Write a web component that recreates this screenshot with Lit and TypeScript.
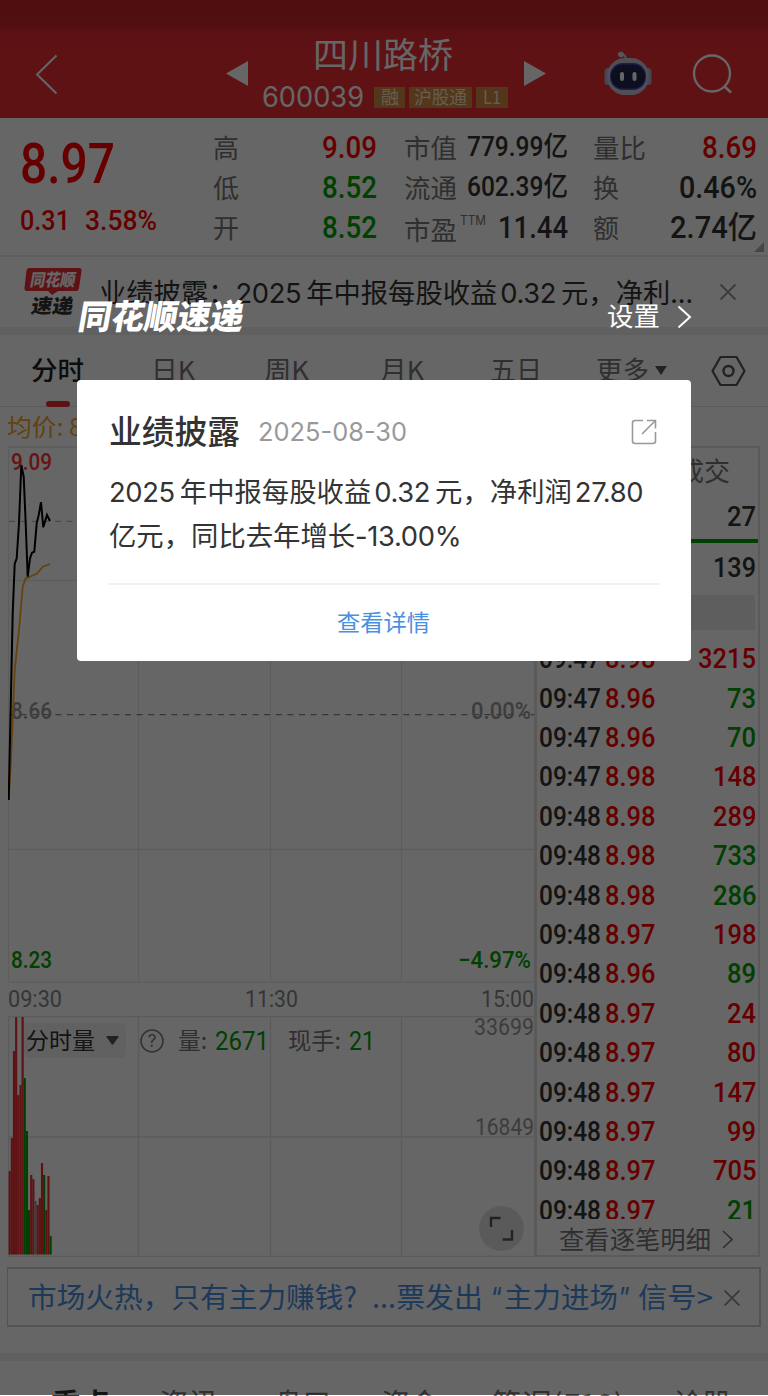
import { LitElement, html, svg, css } from "lit";
import { customElement, property } from "lit/decorators.js";

/** Single line of text set to an exact width, vertically centred on its box. */
@customElement("fit-text")
class FitText extends LitElement {
  @property() text = "";
  @property({ type: Number }) w = 50;
  @property({ type: Number }) size = 26;
  static styles = css`
    :host { display: block; flex: none; }
    svg { display: block; overflow: visible; }
    text { fill: currentColor; white-space: pre; }
  `;
  render() {
    const h = Math.round(this.size);
    return html`<svg width=${this.w} height=${h}><text x="0" y=${h / 2 + this.size * 0.362} font-size=${this.size} textLength=${this.w} lengthAdjust="spacingAndGlyphs">${this.text}</text></svg>`;
  }
}

const t = (text: string, w: number, size: number, cls = "") =>
  html`<fit-text class=${cls} .text=${text} .w=${w} .size=${size}></fit-text>`;

type Cell = [string, number, string, number, number, string];
const quote: Cell[][] = [
  [["高", 26, "9.09", 55, 31, "up"], ["低", 26, "8.52", 55, 31, "down"], ["开", 26, "8.52", 55, 31, "down"]],
  [["市值", 53, "779.99亿", 101, 27, ""], ["流通", 53, "602.39亿", 101, 27, ""], ["市盈", 53, "11.44", 70, 31, ""]],
  [["量比", 53, "8.69", 55, 31, "up"], ["换", 26, "0.46%", 78, 31, ""], ["额", 26, "2.74亿", 87, 31, ""]],
];

const trades: [string, string, string, string][] = [
  ["09:47", "8.98", "3215", "up"], ["09:47", "8.96", "73", "down"], ["09:47", "8.96", "70", "down"],
  ["09:47", "8.98", "148", "up"], ["09:48", "8.98", "289", "up"], ["09:48", "8.98", "733", "down"],
  ["09:48", "8.98", "286", "down"], ["09:48", "8.97", "198", "up"], ["09:48", "8.96", "89", "down"],
  ["09:48", "8.97", "24", "up"], ["09:48", "8.97", "80", "up"], ["09:48", "8.97", "147", "up"],
  ["09:48", "8.97", "99", "up"], ["09:48", "8.97", "705", "up"], ["09:48", "8.97", "21", "down"],
];

/** Volume bars: top edge measured from the top of the panel, and colour. */
const bars: [number, string][] = [
  [155, "r"], [122, "r"], [35, "r"], [1, "r"], [79, "r"], [69, "r"], [1, "r"], [62, "g"], [115, "g"], [194, "g"],
  [159, "r"], [163, "r"], [185, "n"], [189, "r"], [182, "r"], [147, "r"], [159, "g"], [194, "r"], [160, "r"], [220, "g"],
];
const barColor: Record<string, string> = { r: "#eb2d34", g: "#00a000", n: "#999" };

@customElement("app-root")
class AppRoot extends LitElement {
  static styles = css`
    :host { display: block; font-family: "Noto Sans CJK SC", sans-serif; color: #333; }
    * { box-sizing: border-box; }
    svg { display: block; flex: none; }
    .page { position: relative; width: 768px; height: 1396px; overflow: hidden; background: #fff; }
    .row { display: flex; align-items: center; }
    .din { font-family: Roboto, "Noto Sans CJK SC", sans-serif; font-weight: 500; }
    .light { font-weight: 400; }
    .inter { font-family: Inter, "Noto Sans CJK SC", sans-serif; }
    .up { color: #ff0000; }
    .down { color: #00a000; }
    .label { color: #777; }

    header { height: 118px; display: flex; color: #fff; background: linear-gradient(#c1232a 0, #cd272e 27px, #e32b33 30px, #eb2d34 50px); }
    .back { margin: 54px 0 0 35px; }
    .prev { margin: 61px 0 0 168px; }
    .names { width: 246px; margin-left: 14px; padding: 38px 4px 0 0; display: flex; flex-direction: column; align-items: center; }
    .code { margin-top: 10px; gap: 4px; align-self: flex-start; }
    .badge { height: 21px; display: flex; align-items: center; justify-content: center; background: #d08a44; color: #ffe6cc; }
    .b1 { width: 31px; margin-left: 6px; }
    .b2 { width: 63px; }
    .b3 { width: 32px; }
    .next { margin: 61px 0 0 16px; }
    .bot { margin: 50px 0 0 57px; }
    .find { margin: 52px 0 0 39px; }

    .quote { height: 139px; display: flex; padding: 9px 11px 0 20px; border-bottom: 2px solid #e8e8e8; }
    .last { width: 193px; padding-top: 9px; }
    .chg { display: flex; gap: 15px; margin-top: 15px; }
    .group { width: 164px; margin-right: 27px; }
    .group + .group { margin-right: 25px; }
    .group + .group + .group { margin-right: 0; }
    .cell { height: 40px; display: flex; align-items: center; justify-content: space-between; }
    .cell > .label { padding-top: 3px; }
    .cell > .din { padding-bottom: 1px; }
    .cell > .ttm { align-self: flex-start; padding-top: 2px; margin: 0 auto 0 3px; }
    .pe > .label { padding-top: 7px; }
    .corner { align-self: flex-end; margin: 0 -7px 3px -3px; }

    .notice { height: 70px; padding-left: 24px; }
    .ntext { margin-left: 17px; width: 593px; font-size: 27.3px; line-height: 40px; white-space: nowrap; margin-top: -2px; }
    .ntext i, .body i { font-style: normal; font-family: Inter, sans-serif; line-height: 1; letter-spacing: -0.35px; margin: 0 5px 0 0; }
    .ntext i + i, .body i + i { margin-left: 3px; }
    .nclose { margin-left: 28px; }
    .band { height: 8px; background: #f0f0f0; }

    .tabs { height: 72px; padding-left: 31px; border-bottom: 1px solid #e4e4e4; color: #777; }
    .on { font-weight: 500; color: #222; width: 53px; position: relative; }
    .on::after { content: ""; position: absolute; left: 15px; top: 43px; width: 24px; height: 6px; border-radius: 3px; background: #eb2d34; }
    .t1 { margin-left: 67px; } .t2 { margin-left: 69px; } .t3 { margin-left: 71px; } .t4 { margin-left: 66px; } .t5 { margin-left: 54px; }

    .avg { height: 39px; padding-left: 7px; color: #f5a623; }
    .main { display: flex; padding-left: 8px; height: 811px; }
    .charts { width: 526px; flex: none; }
    .axis { height: 33px; padding-bottom: 4px; justify-content: space-between; color: #888; width: 526px; }
    .volume { position: relative; height: 241px; }
    .vhead { position: absolute; left: 16px; top: 7px; height: 35px; }
    .pick { height: 35px; width: 102px; padding-left: 2px; background: rgba(236,236,236,0.7); border-radius: 5px; gap: 11px; }
    .expand { position: absolute; left: 471px; top: 190px; }

    .side { width: 226px; border: 2px solid #e2e2e2; border-left-width: 3px; padding-right: 2px; display: flex; flex-direction: column; }
    .end { display: flex; justify-content: flex-end; }
    .deal { padding: 11px 26px 0 0; }
    .q1 { margin-top: 17px; }
    .green { height: 4px; background: #00a000; margin: 9px -2px 0 0; }
    .q2 { margin-top: 10px; }
    .grey { height: 35px; background: #ececec; margin: 14px 1px 0 0; }
    .list { height: 588px; margin-top: 9px; overflow: hidden; }
    .trade { height: 39.4px; display: flex; align-items: center; padding-left: 2px; }
    .price { margin-left: 4px; }
    .vol { margin-left: auto; }
    .more { margin-left: 22px; gap: 11px; color: #777; height: 32px; margin-top: 4px; }

    .banner { margin: 10px 7px 0; height: 60px; border: 1px solid #cfcfcf; border-width: 2px 2px 2px 1px; padding: 2px 0 0 20px; color: #4a90e2; }
    .bt2 { margin-left: 15px; }
    .ql { margin: 0 2px 0 8px; }
    .qr { margin: 0 8px 0 1px; }
    .bx { margin-left: 11px; }
    .band2 { margin-top: 26px; height: 8px; background: #f0f0f0; }
    .foot { height: 40px; padding: 29px 0 0 51px; align-items: flex-start; color: #777; }
    .foot .sel { color: #333; font-weight: 700; }
    .f1 { margin-left: 49px; } .f2 { margin-left: 56px; } .f3 { margin-left: 50px; } .f4 { margin-left: 52px; } .f5 { margin-left: 49px; }

    .mask { position: absolute; inset: 0 0 1px 0; background: rgba(0, 0, 0, 0.6); padding: 298px 77px 0; }
    .mhead { height: 38px; justify-content: space-between; color: #fff; }
    .brand { font-weight: 900; transform: skewX(-10deg); margin-left: 2px; }
    .set { gap: 17px; margin-right: -1px; }
    .card { margin-top: 44px; height: 281px; border-radius: 4px; background: #fff; padding: 34px 31px 0 32px; }
    .ctitle { height: 36px; }
    .h { font-weight: 500; -webkit-text-stroke: 0.5px #333; }
    .date { color: #999; margin-left: 18px; }
    .ext { margin-left: auto; margin-right: 3px; }
    .body { font-size: 27.35px; line-height: 43.5px; margin-top: 19px; height: 88px; color: #333; white-space: nowrap; }
    .link { margin: 26px 0 0 -1px; border-top: 2px solid #f0f0f0; color: #4a90e2; display: flex; justify-content: center; padding: 26px 2px 0 0; }
  `;

  cross = (s: number) => html`<svg width=${s} height=${s} viewBox="0 0 16 16"><path d="M.5 .5L15.5 15.5M15.5 .5L.5 15.5" stroke="#8c8c8c" stroke-width="1.7" fill="none"/></svg>`;
  tri = html`<svg width="13" height="9" viewBox="0 0 13 9"><path d="M1.2 0H11.8Q13 .2 12.4 1.2L7.3 8.3Q6.5 9.2 5.7 8.3L.6 1.2Q0 .2 1.2 0Z" fill="#555"/></svg>`;

  header() {
    return html`<header>
      <svg class="back" width="23" height="42"><path d="M21.5 1.5L2 20.5L21.5 39.5" fill="none" stroke="#fff" stroke-width="2"/></svg>
      <svg class="prev" width="22" height="26"><path d="M22 0V25L0 12.5Z" fill="#fff"/></svg>
      <div class="names">
        ${t("四川路桥", 140, 35)}
        <div class="row code">${t("600039", 102, 28, "inter")}
          <span class="badge b1">${t("融", 18, 18)}</span><span class="badge b2">${t("沪股通", 53, 18)}</span><span class="badge b3">${t("L1", 18, 18)}</span></div>
      </div>
      <svg class="next" width="22" height="26"><path d="M0 0V25L22 12.5Z" fill="#fff"/></svg>
      <svg class="bot" width="50" height="46" viewBox="0 0 50 46">
        <path d="M15 4Q22 3 23 9" fill="none" stroke="#c8ccdc" stroke-width="2"/><circle cx="18" cy="4.500" r="2.8" fill="#d8dae8"/>
        <rect x="1.500" y="18" width="7" height="17" rx="3.5" fill="#aab0cc"/><rect x="41.500" y="18" width="7" height="17" rx="3.5" fill="#aab0cc"/>
        <rect x="4" y="8" width="42" height="37" rx="18" fill="#c5c8da"/>
        <rect x="7" y="13" width="36" height="27" rx="12.5" fill="#6543c4"/><rect x="8" y="14.5" width="34" height="24" rx="11.5" fill="#202a4c"/>
        <rect x="17" y="22" width="4" height="9" rx="2" fill="#fff"/><rect x="29.5" y="22" width="4" height="9" rx="2" fill="#fff"/>
      </svg>
      <svg class="find" width="42" height="44"><circle cx="20" cy="21.5" r="18" fill="none" stroke="#fff" stroke-width="2.4"/><path d="M32 34L39 40.5" stroke="#fff" stroke-width="2.6"/></svg>
    </header>`;
  }

  priceChart() {
    const line = (p: string) => p.split(" ").map((q) => { const [x, y] = q.split(",").map(Number); return `${(x / 3 - 8).toFixed(1)},${(y / 3 - 6).toFixed(1)}`; }).join(" ");
    return html`<svg width="526" height="537">
      <path d="M.5 536V1H526M.5 134.5H526M.5 403.5H526M0 536H526M130.5 0V536M262.5 0V536M393.5 0V536" fill="none" stroke="#e8e8e8" stroke-width="1.3"/>
      <path d="M1 75.300H526" stroke="#c8b890" stroke-width="1.2" stroke-dasharray="6 5.5"/>
      <path d="M1 268.6H526" stroke="#888" stroke-width="1.3" stroke-dasharray="6 5.6"/>
      <g class="din" font-size="24">
        <text x="3" y="23.500" textLength="41" lengthAdjust="spacingAndGlyphs" fill="#ff3333">9.09</text>
        <text x="3" y="273" textLength="41" lengthAdjust="spacingAndGlyphs" fill="#999">8.66</text>
        <text x="463" y="273" textLength="60" lengthAdjust="spacingAndGlyphs" fill="#999">0.00%</text>
        <text x="3" y="522" textLength="41" lengthAdjust="spacingAndGlyphs" fill="#00a000">8.23</text>
        <text x="450" y="522" textLength="73" lengthAdjust="spacingAndGlyphs" fill="#00a000">−4.97%</text>
      </g>
      <polyline points=${line("26,1080 33,960 44,690 58,560 68,440 77,415 90,410 112,400 128,380 150,372")} fill="none" stroke="#ffa520" stroke-width="1.8"/>
      <polyline points=${line("26,1080 38,520 44,372 50,355 57,250 64,75 71,110 77,250 83,410 90,355 96,338 103,335 110,250 116,225 123,187 130,262 141,225 150,243")} fill="none" stroke="#000" stroke-width="2"/>
    </svg>`;
  }

  volumeChart() {
    return html`<div class="volume">
      <svg width="526" height="241">
        <path d="M.5 240V.5H526M.5 121H526M0 240.5H526M130.5 0V240M262.5 0V240M393.5 0V240" fill="none" stroke="#e4e4e4" stroke-width="1.3"/>
        ${bars.map(([y, c], i) => svg`<rect x=${0.6 + i * 2.155} y=${y} width="2.16" height=${238.5 - y} fill=${barColor[c]}/>`)}
        <g class="din light" font-size="24" fill="#999">
          <text x="466" y="19" textLength="60" lengthAdjust="spacingAndGlyphs">33699</text>
          <text x="467" y="119" textLength="59" lengthAdjust="spacingAndGlyphs">16849</text>
        </g>
      </svg>
      <div class="row vhead">
        <div class="row pick">${t("分时量", 69, 23)}${this.tri}</div>
        <svg width="52" height="26"><circle cx="26" cy="13" r="11" fill="none" stroke="#808080" stroke-width="1.6"/><text x="26" y="19" text-anchor="middle" class="inter" font-size="17" fill="#777">?</text></svg>
        ${t("量:", 29, 23, "label")}<svg width="8" height="2"></svg>${t("2671", 54, 25, "down din light")}<svg width="19" height="2"></svg>
        ${t("现手:", 53, 23, "label")}<svg width="8" height="2"></svg>${t("21", 26, 25, "down din light")}
      </div>
      <svg class="expand" width="45" height="45"><circle cx="22.5" cy="22.5" r="22.5" fill="#e2e2e2"/><path d="M21.5 12H12V21M33 24V33.5H23.5" fill="none" stroke="#555" stroke-width="2.4"/></svg>
    </div>`;
  }

  side() {
    return html`<div class="side">
      <div class="end deal label">${t("成交", 52, 26)}</div>
      <div class="end q1 din">${t("27", 29, 28)}</div>
      <div class="green"></div>
      <div class="end q2 din">${t("139", 43, 28)}</div>
      <div class="grey"></div>
      <div class="list">${trades.map(([a, b, c, d]) => html`<div class="trade din">
        ${t(a, 62, 28)}${t(b, 50.5, 28, "price up")}${t(c, c.length * 14.5, 28, `vol ${d}`)}</div>`)}</div>
      <div class="row more">${t("查看逐笔明细", 152, 25)}<svg width="11" height="19"><path d="M1 1L10 9.5L1 18" fill="none" stroke="#777" stroke-width="1.6"/></svg></div>
    </div>`;
  }

  render() {
    return html`<div class="page">
      ${this.header()}
      <section class="quote">
        <div class="last din up">${t("8.97", 95, 55)}<div class="chg">${t("0.31", 50, 28)}${t("3.58%", 72, 28)}</div></div>
        ${quote.map((g) => html`<div class="group">${g.map(([l, lw, v, vw, s, c]) => html`<div class="cell ${l === "市盈" ? "pe" : ""}">${t(l, lw, 26, "label")}${l === "市盈" ? t("TTM", 26, 12.5, "ttm inter label") : ""}${t(v, vw, s, `din ${c}`)}</div>`)}</div>`)}
        <svg class="corner" width="10" height="10"><path d="M10 0V10H0Z" fill="#b0b0b0"/></svg>
      </section>
      <section class="row notice">
        <svg width="58" height="52"><path d="M5 2H55Q58 2 57.5 5L55 22Q54.5 25 52 25H34L28 29L24 25H3Q0 25 .5 22L2.500 4.500Q3 2 5 2Z" fill="#eb2d34"/>
          <g font-weight="900" font-size="17" transform="skewX(-10)"><text x="9" y="20.500" fill="#fff" textLength="45" lengthAdjust="spacingAndGlyphs">同花顺</text><text x="14.500" y="47" font-size="19.500" fill="#333" textLength="42" lengthAdjust="spacingAndGlyphs">速递</text></g></svg>
        <div class="ntext">业绩披露：<i>2025</i>年中报每股收益<i>0.32</i>元，净利...</div>
        <div class="nclose">${this.cross(16)}</div>
      </section>
      <div class="band"></div>
      <nav class="row tabs">
        ${t("分时", 53, 26, "on")}${t("日K", 44, 26, "t1")}${t("周K", 45, 26, "t2")}${t("月K", 44, 26, "t3")}${t("五日", 52, 26, "t4")}${t("更多", 53, 26, "t5")}
        <svg width="18" height="9" viewBox="-6 0 18 9"><path d="M0 0H12L6 9Z" fill="#555"/></svg>
        <svg width="79" height="32" viewBox="-44.500 0 79 32"><path d="M9 2H25L33 16L25 30H9L1 16Z" fill="none" stroke="#555" stroke-width="2.200" stroke-linejoin="round"/><circle cx="17" cy="16" r="5" fill="none" stroke="#555" stroke-width="2.400"/></svg>
      </nav>
      <div class="row avg">${t("均价: 8.93", 110, 24)}</div>
      <section class="main">
        <div class="charts">${this.priceChart()}
          <div class="row axis din light">${t("09:30", 54, 24)}${t("11:30", 53, 24)}${t("15:00", 53, 24)}</div>
          ${this.volumeChart()}</div>
        ${this.side()}
      </section>
      <section class="row banner">${t("市场火热，只有主力赚钱?", 329, 28)}${t("...票发出", 111, 28, "bt2")}${t("“", 11, 28, "ql inter")}${t("主力进场", 114, 28)}${t("”", 11, 28, "qr inter")}${t("信号>", 75, 28)}<div class="bx">${this.cross(16)}</div></section>
      <div class="band2"></div>
      <nav class="row foot">${t("重点", 59, 29, "sel")}${t("资讯", 59, 29, "f1")}${t("盘口", 57, 29, "f2")}${t("资金", 58, 29, "f3")}${t("简况(F10)", 133, 29, "f4")}${t("诊股", 59, 29, "f5")}</nav>
      <div class="mask">
        <div class="row mhead">${t("同花顺速递", 165, 34, "brand")}<div class="row set">${t("设置", 53, 26)}<svg width="15" height="24"><path d="M1.500 1.500L13 12L1.500 22.500" fill="none" stroke="#fff" stroke-width="2"/></svg></div></div>
        <div class="card">
          <div class="row ctitle">${t("业绩披露", 131, 32.5, "h")}${t("2025-08-30", 149, 26, "date inter")}
            <svg class="ext" width="26" height="26"><path d="M12 1.500H4Q1.500 1.500 1.500 4V22Q1.500 24.500 4 24.500H22Q24.500 24.500 24.500 22V13M11 15L24 2M16 1.500H24.500V9.500" fill="none" stroke="#999" stroke-width="1.600"/></svg></div>
          <div class="body"><i>2025</i>年中报每股收益<i>0.32</i>元，净利润<i>27.80</i><br>亿元，同比去年增长<i>-13.00%</i></div>
          <div class="link">${t("查看详情", 93, 23)}</div>
        </div>
      </div>
    </div>`;
  }
}
